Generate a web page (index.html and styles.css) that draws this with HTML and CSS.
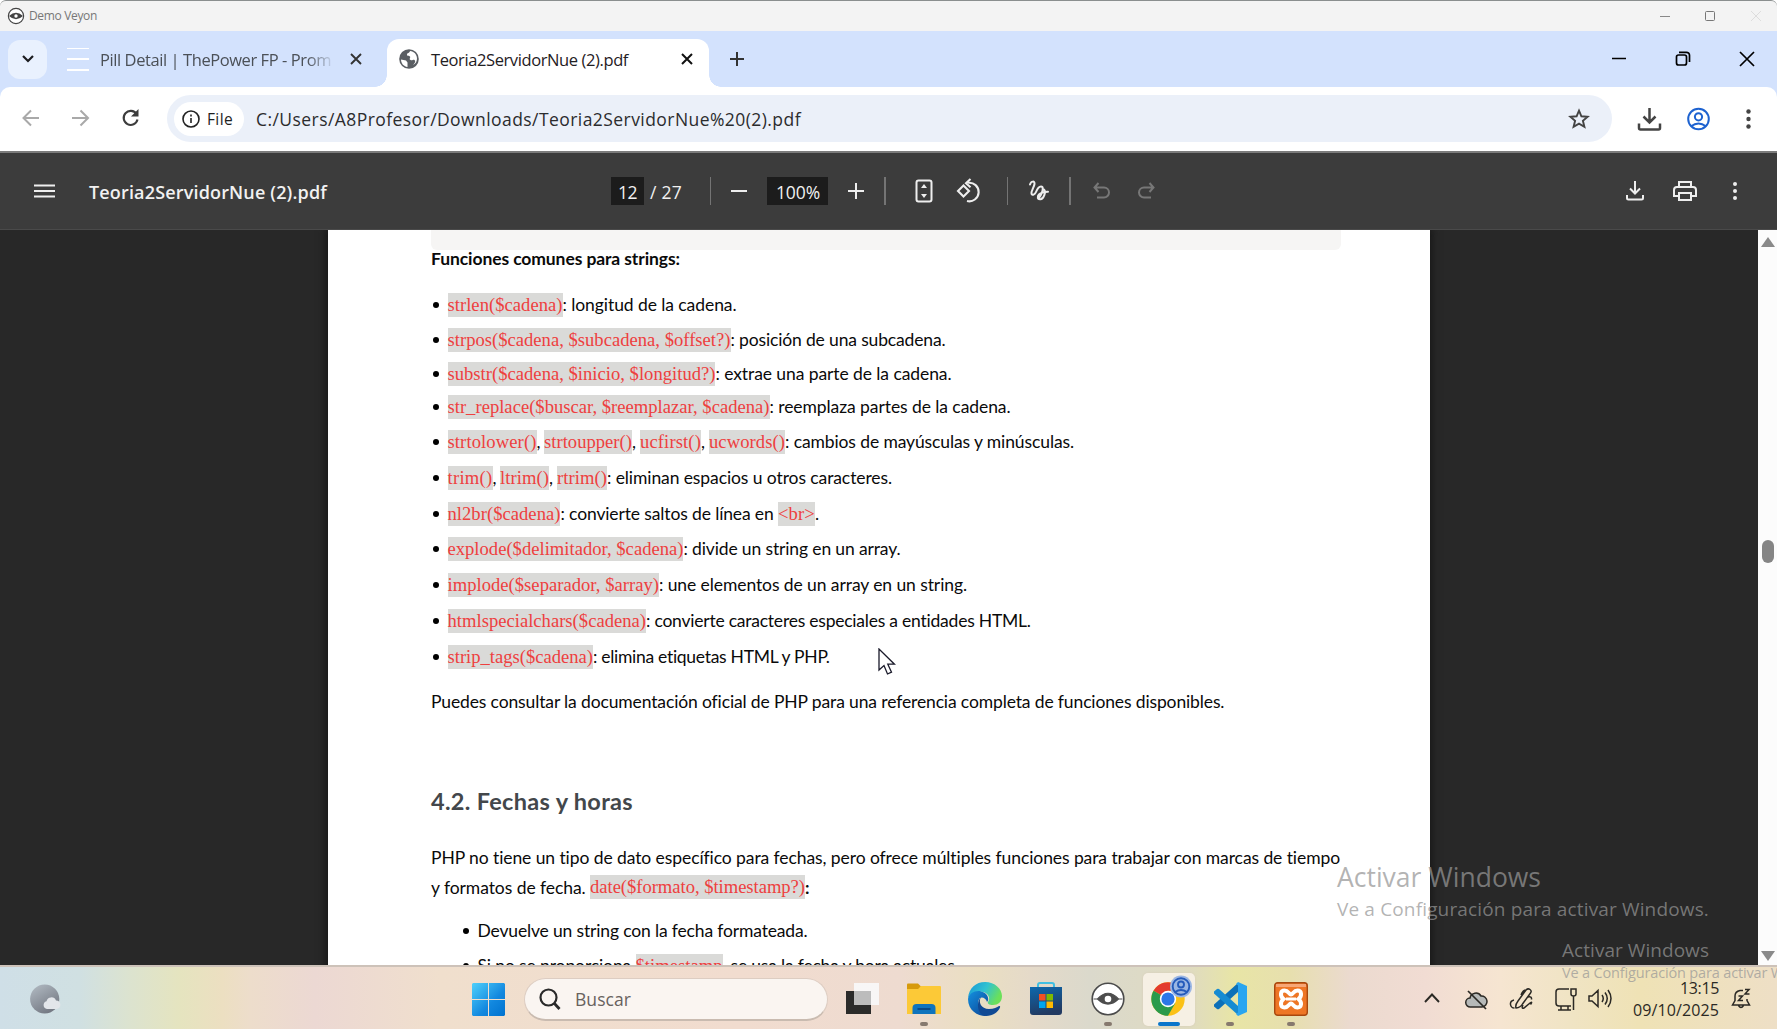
FILE: index.html
```html
<!DOCTYPE html>
<html lang="es">
<head>
<meta charset="utf-8">
<title>Demo Veyon</title>
<link rel="stylesheet" href="styles.css">
</head>
<body>
<header class="titlebar">
  <svg class="ti-logo" width="18" height="18" viewBox="0 0 18 18"><circle cx="9" cy="9" r="7.6" fill="#fff" stroke="#444" stroke-width="1.2"/><path d="M2 9Q9 2.500 16 9Q9 15.500 2 9Z" fill="#444"/><circle cx="9" cy="9" r="1.700" fill="#fff"/></svg>
  <span class="ti-name" data-w="68">Demo Veyon</span>
  <svg class="ti-ctl" width="104" height="12" viewBox="0 0 104 12" fill="none"><path d="M1 6.500h10" stroke="#888"/><rect x="46.500" y="1.500" width="9" height="9" rx="1" stroke="#777"/><path d="M92 1l10 10M102 1l-10 10" stroke="#ddd"/></svg>
</header>

<div class="tabs">
  <div class="tab-search"><svg width="14" height="10" viewBox="0 0 14 10" fill="none" stroke="#1c1d20" stroke-width="2.200"><path d="M2 2l5 5 5-5"/></svg></div>
  <div class="fav-lines"><i></i><i></i><i></i></div>
  <div class="tab-title faded"><span data-w="231">Pill Detail | ThePower FP - Prom</span></div>
  <svg class="x1" width="12" height="12" viewBox="0 0 12 12" stroke="#333" stroke-width="1.900"><path d="M1 1l10 10M11 1L1 11"/></svg>
  <div class="tab-active">
    <svg width="20" height="20" viewBox="0 0 20 20"><circle cx="10" cy="10" r="9.800" fill="#5a5e63"/><path d="M2 10.500l5 1 1.500 2v4.500C4.500 17.500 2 14 2 10.500zM11 2c-.5 2.500-3 1.500-3 3.500s2 1 3 2-1.500 2.500.5 3.500 2.500-1 4 0 .5 3-1.500 5c3-1.500 4-4 4-6.500C18 5.500 15 2.300 11 2z" fill="#fff"/></svg>
    <span class="tab-title act" data-w="197">Teoria2ServidorNue (2).pdf</span>
    <svg class="x2" width="12" height="12" viewBox="0 0 12 12" stroke="#111" stroke-width="2"><path d="M1 1l10 10M11 1L1 11"/></svg>
  </div>
  <svg class="newtab" width="16" height="16" viewBox="0 0 16 16" stroke="#333" stroke-width="2"><path d="M8 1v14M1 8h14"/></svg>
  <svg class="winctl" width="144" height="18" viewBox="0 0 144 18" fill="none" stroke="#000" stroke-width="1.700"><path d="M1 8.500h14M129 2l14 14M143 2l-14 14"/><rect x="65.500" y="5" width="10" height="10" rx="2"/><path d="M68 2.300h7.500a3 3 0 0 1 3 3V12"/></svg>
</div>

<div class="toolbar">
  <svg class="nav" width="122" height="20" viewBox="0 0 122 20" fill="none" stroke-width="2"><path d="M17 10H2M9 2.500L1.500 10 9 17.500M50 10h15M58.500 2.500L66 10l-7.500 7.500" stroke="#a9a9a9"/><path d="M114.500 6a7 7 0 1 0 1 5.500" stroke="#3c3c3c" stroke-width="2.100"/><path d="M116.500 1v7.500H109z" fill="#3c3c3c"/></svg>
  <div class="omnibox">
    <div class="chip"><svg width="18" height="18" viewBox="0 0 18 18" fill="none" stroke="#222" stroke-width="1.600"><circle cx="9" cy="9" r="8"/><path d="M9 8v5M9 4.500v2"/></svg><span data-w="26">File</span></div>
    <span class="url" data-w="545">C:/Users/A8Profesor/Downloads/Teoria2ServidorNue%20(2).pdf</span>
    <svg class="star" width="22" height="22" viewBox="0 0 22 22" fill="none" stroke="#444" stroke-width="1.900"><path d="M11 2.600l2.400 5.700 6.200.5-4.700 4 1.500 6L11 15.600l-5.400 3.200 1.500-6-4.700-4 6.200-.5z"/></svg>
  </div>
  <svg class="tools" width="120" height="24" viewBox="0 0 120 24" fill="none"><path d="M12.500 1v14M6.500 9.500l6 6 6-6M2 16.500V21q0 1.500 1.500 1.500h18q1.500 0 1.500-1.500v-4.500" stroke="#444" stroke-width="2.500"/><g stroke="#1d62d0" stroke-width="2"><circle cx="61.500" cy="12" r="10.300"/><circle cx="61.500" cy="9.800" r="3.600"/><path d="M54 19.200q7.500-5.500 15 0"/></g><g fill="#444"><circle cx="111.500" cy="4.500" r="2.200"/><circle cx="111.500" cy="12" r="2.200"/><circle cx="111.500" cy="19.500" r="2.200"/></g></svg>
</div>

<div class="pdfbar">
  <svg class="burger" width="21" height="14" viewBox="0 0 21 14" stroke="#eee" stroke-width="2"><path d="M0 1.500h21M0 7h21M0 12.500h21"/></svg>
  <span class="pdf-name" data-w="238">Teoria2ServidorNue (2).pdf</span>
  <span class="box pg"><b data-w="19">12</b></span><span class="total" data-w="32">/ 27</span>
  <i class="sep s1"></i>
  <svg class="minus" width="16" height="16" viewBox="0 0 16 16" stroke="#eee" stroke-width="2"><path d="M0 8h16"/></svg>
  <span class="box zm"><b data-w="44">100%</b></span>
  <svg class="plus" width="16" height="16" viewBox="0 0 16 16" stroke="#eee" stroke-width="2"><path d="M0 8h16M8 0v16"/></svg>
  <i class="sep s2"></i>
  <svg class="fit" width="18" height="24" viewBox="0 0 18 24" fill="none" stroke="#eee" stroke-width="2"><rect x="1.500" y="1.500" width="15" height="21" rx="2"/><path d="M6 9l3-4 3 4zM6 15l3 4 3-4z" fill="#eee" stroke="none"/></svg>
  <svg class="rot" width="26" height="26" viewBox="0 0 26 26" fill="none" stroke="#eee" stroke-width="2.100"><path d="M8.500 7.500L14 13l-5.500 5.500L3 13zM13 4.800a9.300 9.300 0 1 1-1 18.200"/><path d="M15.500 1L11 5.200l4.500 4"/></svg>
  <i class="sep s3"></i>
  <svg class="ink" width="22" height="22" viewBox="0 0 22 22" fill="none" stroke="#eee" stroke-width="2" stroke-linecap="round"><path d="M2 4.500C3 1 7 .5 6.500 4 6 7.500 3 11 3.500 13.500c.5 2.500 3.500 1 4.500-1.500s2.500-5.500 5-5.500 2 3.500.5 7-3 5.500-3.500 3.500 3-5.500 10-5.300M16 9.500c2.500 2-.5 9.500-3.500 9.800-2.500.2-3-1-2.500-2.500"/></svg>
  <i class="sep s4"></i>
  <svg class="undo" width="62" height="18" viewBox="0 0 62 18" fill="none" stroke="#777" stroke-width="2"><path d="M5.500 1L1.500 5.500l4 4.500M2 5.500h9a4.800 4.800 0 0 1 0 10H4M56.500 1l4 4.500-4 4.500M60 5.500h-9a4.800 4.800 0 0 0 0 10h7"/></svg>
  <svg class="pdf-tools" width="116" height="24" viewBox="0 0 116 24" fill="none" stroke="#eee" stroke-width="2"><path d="M9 2v12M4 9.500l5 5 5-5M1 16v3q0 1.500 1.500 1.500h13q1.500 0 1.500-1.500v-3"/><path d="M53 7V3h12v4M52 17h-4v-6q0-3 3-3h16q3 0 3 3v6h-4M53 14h12v7H53z"/><g fill="#eee" stroke="none"><circle cx="109" cy="5" r="2"/><circle cx="109" cy="12" r="2"/><circle cx="109" cy="19" r="2"/></g></svg>
</div>

<main class="viewer">
  <article class="page">
    <div class="codeblock"></div>
    <h3><span data-w="249">Funciones comunes para strings:</span></h3>
    <ul class="fn">
      <li class="h35"><code data-w="115">strlen($cadena)</code><span data-w="174">: longitud de la cadena.</span></li>
      <li class="h34"><code data-w="283">strpos($cadena, $subcadena, $offset?)</code><span data-w="215">: posición de una subcadena.</span></li>
      <li class="h33"><code data-w="268">substr($cadena, $inicio, $longitud?)</code><span data-w="236">: extrae una parte de la cadena.</span></li>
      <li class="h35"><code data-w="322">str_replace($buscar, $reemplazar, $cadena)</code><span data-w="241">: reemplaza partes de la cadena.</span></li>
      <li><code data-w="89">strtolower()</code><span data-w="7.5">, </span><code data-w="88">strtoupper()</code><span data-w="8">, </span><code data-w="61">ucfirst()</code><span data-w="8">, </span><code data-w="76">ucwords()</code><span data-w="289">: cambios de mayúsculas y minúsculas.</span></li>
      <li><code data-w="45">trim()</code><span data-w="7.5">, </span><code data-w="49">ltrim()</code><span data-w="8">, </span><code data-w="50">rtrim()</code><span data-w="285">: eliminan espacios u otros caracteres.</span></li>
      <li class="h35"><code data-w="113">nl2br($cadena)</code><span data-w="217.5">: convierte saltos de línea en </span><code data-w="37">&lt;br&gt;</code><span data-w="5">.</span></li>
      <li><code data-w="236">explode($delimitador, $cadena)</code><span data-w="217">: divide un string en un array.</span></li>
      <li><code data-w="211.5">implode($separador, $array)</code><span data-w="308">: une elementos de un array en un string.</span></li>
      <li><code data-w="198.5">htmlspecialchars($cadena)</code><span data-w="385">: convierte caracteres especiales a entidades HTML.</span></li>
      <li><code data-w="145.5">strip_tags($cadena)</code><span data-w="237">: elimina etiquetas HTML y PHP.</span></li>
    </ul>
    <p class="see"><span data-w="793">Puedes consultar la documentación oficial de PHP para una referencia completa de funciones disponibles.</span></p>
    <h2><span data-w="202">4.2. Fechas y horas</span></h2>
    <p class="intro"><span data-w="910">PHP no tiene un tipo de dato específico para fechas, pero ofrece múltiples funciones para trabajar con marcas de tiempo</span></p>
    <p class="intro"><span data-w="159">y formatos de fecha. </span><code data-w="215">date($formato, $timestamp?)</code><span class="b" data-w="6">:</span></p>
    <ul class="sub">
      <li><span data-w="330">Devuelve un string con la fecha formateada.</span></li>
      <li><span data-w="158">Si no se proporciona </span><code data-w="87">$timestamp</code><span data-w="236">, se usa la fecha y hora actuales.</span></li>
    </ul>
  </article>
  <div class="scroll"><i class="up"></i><i class="thumb"></i><i class="down"></i></div>
</main>

<footer class="taskbar">
  <svg class="weather" width="32" height="31" viewBox="0 0 32 31"><defs><linearGradient id="moon" x2=".6" y2="1"><stop stop-color="#b4bdc5"/><stop offset="1" stop-color="#747983"/></linearGradient></defs><circle cx="14.700" cy="15" r="14.600" fill="url(#moon)"/><path d="M17 25a4 4 0 0 1-.5-7.800 5 5 0 0 1 9.500-.7 4.300 4.300 0 0 1 1 8.500z" fill="#e3e6ea"/></svg>
  <svg class="start" width="33" height="33" viewBox="0 0 33 33"><defs><linearGradient id="win" x2="1" y2="1"><stop stop-color="#4fd0fb"/><stop offset=".6" stop-color="#1288df"/><stop offset="1" stop-color="#0072cf"/></linearGradient></defs><path d="M1 0h15v16H0V1zM17 0h15l1 1v15H17zM0 17h16v16H1l-1-1zM17 17h16v15l-1 1H17z" fill="url(#win)"/></svg>
  <div class="search"><svg width="22" height="22" viewBox="0 0 22 22" fill="none" stroke="#2a2a2a" stroke-width="2.200"><circle cx="9.500" cy="9.500" r="8"/><path d="M15 15l5.500 6" stroke-width="2.800"/></svg><span data-w="56">Buscar</span></div>
  <div class="apps">
    <div class="app"><svg width="34" height="34" viewBox="0 0 34 34"><path d="M0 9h25v23H0z" fill="#2b2b2a"/><path d="M8 1h25v22H8z" fill="#f8f8f8" opacity=".95"/><path d="M8 9h17v14H8z" fill="#bcbcbc"/></svg></div>
    <div class="app run"><svg width="34" height="34" viewBox="0 0 34 34"><path d="M0 2.500q0-1 1-1h10l3 3-2 4H0z" fill="#d69a0c"/><path d="M0 7h11l3-3h19q1 0 1 1v27H0z" fill="#fcc937"/><path d="M5.500 32v-6q0-4 4-4h15q4 0 4 4v6z" fill="#0f74bd"/><path d="M10.500 27h13" stroke="#084a88" stroke-width="2"/></svg></div>
    <div class="app"><svg width="34" height="34" viewBox="0 0 34 34"><defs><linearGradient id="ea" x2="1" y2=".4"><stop stop-color="#1695d8"/><stop offset=".55" stop-color="#31c3d0"/><stop offset="1" stop-color="#6be05a"/></linearGradient><linearGradient id="eb" x2=".8" y2="1"><stop stop-color="#1490df"/><stop offset="1" stop-color="#0c4b9b"/></linearGradient></defs><path d="M0 16C1 6 8 0 17 0c10 0 17 7 17 14 0 6-4 9-9 9-4 0-6-1.500-5-3 3-4 0-9-5-10C8 9 2 12 0 16z" fill="url(#ea)"/><path d="M0 17C1 11 8 8 13 9.500c5 1 8 5 7 9l-1 1.500c-1-4-5-5.500-7-4C8 19 12 34 20 33.700 12 35 0 30 0 17z" fill="url(#eb)"/><path d="M13 15c-3 5 0 12 8 12 5 0 8-1.500 10-3 1 0 1.500.5 1 1.500C30 30 25 34 18 34 9 33 8 20 13 15z" fill="#114a94"/></svg></div>
    <div class="app"><svg width="34" height="34" viewBox="0 0 34 34"><defs><linearGradient id="st" x2=".3" y2="1"><stop stop-color="#0d68ad"/><stop offset="1" stop-color="#223a62"/></linearGradient></defs><path d="M9 7V3q0-2 2-2h12q2 0 2 2v4" fill="none" stroke="#41bfe2" stroke-width="2"/><path d="M1 5h32v25q0 3-3 3H4q-3 0-3-3z" fill="url(#st)"/><path d="M10 12h6.500v6.500H10z" fill="#f25022"/><path d="M17.500 12H24v6.500h-6.500z" fill="#7fba00"/><path d="M10 19.500h6.500V26H10z" fill="#00a4ef"/><path d="M17.500 19.500H24V26h-6.500z" fill="#ffb900"/></svg></div>
    <div class="app run"><svg width="34" height="34" viewBox="0 0 34 34"><circle cx="17" cy="17" r="15.800" fill="#fff" stroke="#4b4b4b" stroke-width="1.600"/><path d="M2.500 17h4Q17 5.500 27.500 17h4M2.500 17h4Q17 27 27.500 17h4" fill="#4d4d4d" stroke="#4d4d4d" stroke-width="1.200"/><circle cx="17" cy="17" r="3.300" fill="#fff"/></svg></div>
    <div class="app cur"><svg width="46" height="44" viewBox="0 0 46 44"><g transform="translate(4 9)"><circle cx="17" cy="17" r="16.700" fill="#fbc116"/><path d="M17 17L2.540 8.650A16.700 16.700 0 0 1 31.460 8.650H17z" fill="#e33b2e"/><path d="M2.540 8.650A16.700 16.700 0 0 0 17 33.700L24.200 21.200 17 17z" fill="#2a9a4c"/><circle cx="17" cy="17" r="8.200" fill="#fff"/><circle cx="17" cy="17" r="6.600" fill="#2b77e8"/></g><circle cx="34" cy="13.500" r="11" fill="#9bb6e3"/><g fill="none" stroke="#255bbb" stroke-width="1.900"><circle cx="34" cy="13.500" r="8.300"/><circle cx="34" cy="11.500" r="3"/><path d="M28 19q6-4 12 0"/></g></svg></div>
    <div class="app run"><svg width="34" height="34" viewBox="0 0 34 34"><path d="M25 1L1 22.500v2L4 27q1 .5 2 0L25 10z" fill="#0c70b8"/><path d="M25 33L1 11.500v-2L4 7q1-.5 2 0L25 24z" fill="#168bd2"/><path d="M25 0l9 4v26l-9 4-2-2 2-1.500V3.500L23 2z" fill="#29a5f0"/></svg></div>
    <div class="app run"><svg width="34" height="34" viewBox="0 0 34 34"><rect x=".7" y=".7" width="32.600" height="32.600" rx="3" fill="#ee7625" stroke="#a8480f" stroke-width="1.400"/><path d="M2 2h30v3H2z" fill="#f7a776"/><path d="M10.500 8.500c-4 0-5 5-1 8.500-4 3.500-3 8.500 1 8.500s4.500-4 6.500-4 2.500 4 6.500 4 5-5 1-8.500c4-3.500 3-8.500-1-8.500s-4.500 4-6.500 4-2.500-4-6.500-4z" fill="none" stroke="#fff" stroke-width="4"/><path d="M12 17h10" stroke="#fff" stroke-width="3"/></svg></div>
  </div>
  <svg class="tray" width="188" height="26" viewBox="0 0 188 26" fill="none" stroke="#2b2924" stroke-width="1.500"><path d="M1 16l7-7.500 7 7.500" stroke-width="1.900"/><path d="M46.500 21a4.500 4.500 0 0 1-.5-9 6 6 0 0 1 11-2 5.500 5.500 0 0 1 1 11z" fill="#b6b9b8"/><path d="M44 5l18 18" stroke-width="1.700"/><path d="M92 22q-1-3 2-7l8-11q2-2 4-.5t.500 3.500l-8 11q-2 3.500-6.500 4zM97 9q2-5 5-5M90 14q-4 1-3.500 4.500t4 3.500M99 19q-2 4 1 3l6-5q3-2 .5 1.500M104 11q4-1 3.500 2.500"/><path d="M145 3h-10q-3 0-3 3v11q0 3 3 3h12M137 20v4m7-4v4M134 24h13M147 3h5v5q0 2-2.500 2t-2.500-2zM149.500 10v14"/><path d="M165 10h3l6-5.500v16l-6-5.500h-3zM178 9q2.500 3.500 0 7M181 6.500q4.500 6 0 12M184 4q6 8.500 0 17"/></svg>
  <div class="clock"><span data-w="39">13:15</span><span data-w="86">09/10/2025</span></div>
  <svg class="bell" width="20" height="22" viewBox="0 0 20 22" fill="none" stroke="#2b2924" stroke-width="1.500"><path d="M12 2.500H9Q4 3.500 4 8v4.500L1.500 17h17L16 12.500V11M7.500 17.500q2.500 4 5 0M7.500 8h4l-4 4.500h4.500M14 1.500h4l-4 4.500h4.500"/></svg>
</footer>

<div class="mark big"><span data-w="204">Activar Windows</span></div>
<div class="mark mid"><span data-w="372">Ve a Configuración para activar Windows.</span></div>
<div class="mark sm"><span data-w="147">Activar Windows</span></div>
<div class="mark xs"><span data-w="273">Ve a Configuración para activar Windows.</span></div>
<svg class="cursor" width="18" height="28" viewBox="0 0 18 28"><path d="M1 1v21l5-4.500 3.500 8.500 4-1.800-3.700-8h6.700z" fill="#fff" stroke="#1a1a2a" stroke-width="1.300"/></svg>
<script src="fit.js"></script>
</body>
</html>
```
FILE: styles.css
```css
* { box-sizing: border-box; }
body { margin: 0; width: 1777px; height: 1029px; overflow: hidden; position: relative; display: flex; flex-direction: column; font-family: "Open Sans", "Noto Sans", sans-serif; background: #fff; }
svg { display: block; flex: none; }
span, code, b { white-space: pre; flex: none; }
i { flex: none; }

.titlebar { height: 31px; flex: none; background: #f3f3f3; border-top: 1px solid #8a8e8e; border-radius: 6px 6px 0 0; display: flex; align-items: center; padding: 0 0 1px 7px; }
.ti-name { margin-left: 4px; font-size: 12px; color: #777; }
.ti-ctl { margin-left: auto; margin-right: 14px; }

.tabs { height: 56px; flex: none; background: #d3e2fd; display: flex; align-items: center; padding-left: 8px; }
.tab-search { width: 39px; height: 39px; border-radius: 12px; background: #e9f1fe; display: flex; align-items: center; justify-content: center; }
.fav-lines { width: 22px; height: 23px; margin-left: 20px; display: flex; flex-direction: column; justify-content: space-between; }
.fav-lines i { height: 1.500px; background: #fff; }
.tab-title { font-size: 16.500px; color: #4b5057; margin-left: 11px; padding-top: 1px; }
.faded { width: 235px; overflow: hidden; -webkit-mask-image: linear-gradient(90deg, #000 88%, transparent); mask-image: linear-gradient(90deg, #000 88%, transparent); display: flex; }
.x1 { margin-left: 15px; }
.tab-active { position: relative; align-self: flex-end; width: 322px; height: 48px; margin-left: 25px; padding: 0 0 8px 12px; background: #fff; border-radius: 12px 12px 0 0; display: flex; align-items: center; }
.tab-active::before, .tab-active::after { content: ""; position: absolute; bottom: 0; width: 12px; height: 12px; }
.tab-active::before { left: -12px; background: radial-gradient(circle at 0 0, transparent 11.500px, #fff 12px); }
.tab-active::after { right: -12px; background: radial-gradient(circle at 100% 0, transparent 11.500px, #fff 12px); }
.act { color: #1f2023; margin-left: 12px; }
.x2 { margin-left: 53px; }
.newtab { margin-left: 20px; }
.winctl { margin-left: auto; margin-right: 22px; }

.toolbar { height: 65px; flex: none; background: #fff; border-radius: 10px 10px 0 0; box-shadow: 0 -12px 0 0 #d3e2fd; display: flex; align-items: center; padding: 0 0 2px 22px; margin-bottom: -1px; }
.tabs { z-index: 1; }
.nav { margin-bottom: 1px; }
.omnibox { margin-left: 23px; width: 1445px; height: 47px; border-radius: 24px; background: #ebf0f9; display: flex; align-items: center; padding-left: 7px; }
.chip { width: 70px; height: 34px; border-radius: 17px; background: #fff; display: flex; align-items: center; padding-left: 8px; gap: 7px; font-size: 15.500px; font-weight: 500; color: #1f1f1f; }
.url { margin-left: 12px; font-size: 17.500px; color: #2b2c2e; }
.star { margin-left: auto; margin-right: 22px; }
.tools { margin-left: 25px; }

.pdfbar { height: 79px; flex: none; background: #3c3c3c; border-top: 2px solid #7c7c7c; border-bottom: 1px solid #4a4a4a; display: flex; align-items: center; padding-left: 34px; color: #f1f1f1; font-size: 17.500px; z-index: 1; }
.pdf-name { margin-left: 34px; font-weight: 600; font-size: 18px; padding-top: 2px; }
.total { padding-top: 2px; }
.box { height: 28px; background: #1c1c1c; display: flex; align-items: center; justify-content: center; }
.box b { font-weight: 400; padding-top: 2px; }
.pg { width: 33px; margin-left: 284px; }
.total { margin-left: 6px; }
.sep { width: 1.500px; height: 28px; background: #747474; }
.s1 { margin-left: 28px; }
.minus { margin-left: 20px; }
.zm { width: 61px; margin-left: 20px; }
.plus { margin-left: 20px; }
.s2 { margin-left: 20px; }
.fit { margin-left: 29px; }
.rot { margin-left: 22px; }
.s3 { margin-left: 26px; }
.ink { margin-left: 20px; }
.s4 { margin-left: 19px; }
.undo { margin-left: 22px; }
.pdf-tools { margin-left: auto; margin-right: 35px; }

.viewer { height: 735px; flex: none; background: #282828; display: flex; padding-left: 328px; overflow: hidden; }
.page { width: 1102px; height: 900px; background: #fff; padding: 0 0 0 103px; box-shadow: 0 0 8px 2px #161616; font-family: Lato, sans-serif; font-size: 17.500px; color: #0a0a0a; }
.codeblock { width: 910px; height: 20px; background: #f6f5f4; border-radius: 0 0 6px 6px; }
h2, h3, p, ul { margin: 0; padding: 0; font-size: inherit; }
h3 { height: 43px; line-height: 18px; font-weight: 700; }
ul { list-style: none; }
li { height: 36px; line-height: 24px; display: flex; }
li::before { content: ""; width: 6px; height: 6px; border-radius: 50%; background: #000; margin: 9px 8.500px 0 2px; flex: none; }
.h35 { height: 35px; }
.h34 { height: 34px; }
.h33 { height: 33px; }
code { font-family: "Liberation Serif", serif; font-size: 18.600px; line-height: 23px; height: 23.500px; background: #dadad8; color: #ee403f; }
.see { height: 99px; line-height: 24px; padding-top: 9px; }
h2 { font-size: 23.500px; line-height: 30px; height: 60px; color: #43474b; margin-top: 6px; }
.intro { height: 30px; line-height: 24px; display: flex; }
.intro code { margin-top: -1px; }
.b { font-weight: 700; }
.sub { padding-left: 30px; margin-top: 13px; }
.sub li { height: 35px; }
.scroll { width: 19px; margin-left: auto; background: #fcfcfc; display: flex; flex-direction: column; align-items: center; padding: 7px 0 4px; }
.up { border: 7px solid transparent; border-top: 0; border-bottom: 10px solid #8a8a8a; }
.down { border: 7px solid transparent; border-bottom: 0; border-top: 10px solid #8a8a8a; margin-top: auto; }
.thumb { width: 12px; height: 23px; border-radius: 6px; background: #858585; margin-top: 293px; }

.taskbar { height: 64px; flex: none; border-top: 2px solid #cdc2b9; display: flex; align-items: center; padding-top: 2px; background: linear-gradient(90deg, #cfdfe7 0, #d0e0e2 80px, #dce3cf 130px, #e5e4bf 180px, #ecdfc1 222px, #edddcb 250px, #ecd8d3 315px, #f0dfcd 440px, #f1dccf 740px, #eedbd0 900px, #eadfc2 980px, #e5dac9 1030px, #dbd9cc 1090px, #dfdbc0 1190px, #e8e5a6 1235px, #e7dfae 1290px, #ebdacf 1350px, #f1dcd3 1425px, #f6e5d1 1500px, #f0e4c4 1570px, #efe2b5 1640px, #eedfc6 1777px); }
.weather { margin-left: 30px; }
.start { margin-left: 410px; }
.search { width: 304px; height: 43px; margin-left: 19px; border-radius: 22px; background: #faf5f1; border: 1px solid #ddcdc2; border-bottom: 2px solid #c9bbb0; display: flex; align-items: center; padding-left: 14px; font-size: 17.500px; color: #68625e; }
.search span { margin-left: 14px; }
.apps { display: flex; align-items: center; margin-left: 9px; gap: 9.150px; }
.app { position: relative; width: 52px; height: 53px; border-radius: 5px; display: flex; align-items: center; justify-content: center; }
.run::after, .cur::after { content: ""; position: absolute; bottom: 0; width: 8px; height: 4px; border-radius: 2px; background: #86796e; }
.cur { background: #f6f0e4; box-shadow: 0 0 2px #d6cbb6; }
.cur svg { margin: -8px 0 0 2px; }
.cur::after { width: 22px; background: #0a76cb; }
.tray { margin-left: 107px; }
.clock { width: 107px; display: flex; flex-direction: column; align-items: flex-end; font-size: 16px; line-height: 22px; color: #2b2924; }
.bell { margin-left: 12px; }

.mark { position: absolute; color: rgba(150, 150, 150, .72); z-index: 3; display: flex; }
.big { left: 1337px; top: 857px; font-size: 26.500px; line-height: 40px; }
.mid { left: 1337px; top: 894px; font-size: 19px; line-height: 30px; }
.sm { left: 1562px; top: 935px; font-size: 19px; line-height: 30px; }
.xs { left: 1562px; top: 961px; font-size: 14.500px; line-height: 24px; }
.cursor { position: absolute; left: 878px; top: 648px; z-index: 3; }
```
FILE: fit.js
```js
// Tracks each run of text so that it fills its set width.
document.querySelectorAll('[data-w]').forEach(function (run) {
  var natural = run.getBoundingClientRect().width;
  var spacing = (Number(run.dataset.w) - natural) / run.textContent.length;
  run.style.letterSpacing = spacing.toFixed(3) + 'px';
});
```
